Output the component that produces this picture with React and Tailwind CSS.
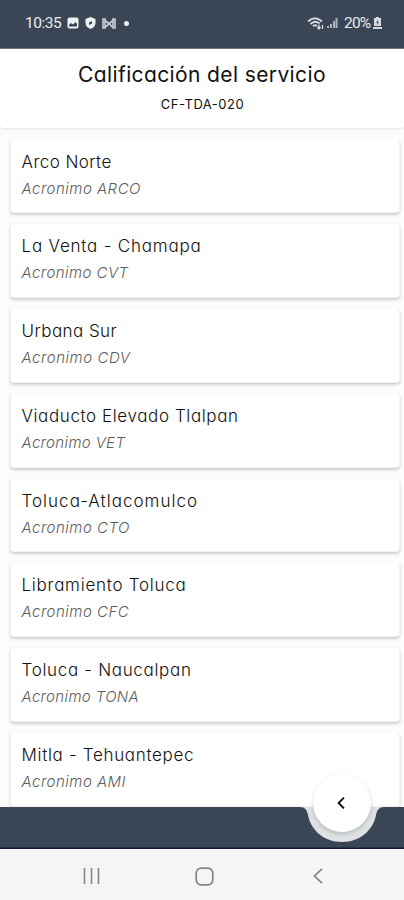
const roads = [
  { name: 'Arco Norte', code: 'ARCO', nameGap: '0.45px', codeGap: '0.5px' },
  { name: 'La Venta - Chamapa', code: 'CVT', nameGap: '0.8px', codeGap: '0.45px' },
  { name: 'Urbana Sur', code: 'CDV', nameGap: '0.45px', codeGap: '0.55px' },
  { name: 'Viaducto Elevado Tlalpan', code: 'VET', nameGap: '0.6px', codeGap: '0.35px' },
  { name: 'Toluca-Atlacomulco', code: 'CTO', nameGap: '1.02px', codeGap: '0.5px' },
  { name: 'Libramiento Toluca', code: 'CFC', nameGap: '0.75px', codeGap: '0.5px' },
  { name: 'Toluca - Naucalpan', code: 'TONA', nameGap: '0.68px', codeGap: '0.35px' },
  { name: 'Mitla - Tehuantepec', code: 'AMI', nameGap: '0.68px', codeGap: '0.5px' },
];

function StatusBar() {
  return (
    <div className="flex h-[49px] shrink-0 items-center justify-between border-b border-[#6d7580] bg-[#3a4655] pr-[22px] pb-[2px] pl-[25px] font-['Roboto',sans-serif] text-[#e9edf1]">
      <div className="flex items-center">
        <span className="w-[36px] text-[15.5px] leading-[18px] tracking-[-0.5px]">10:35</span>
        <svg className="ml-[6px]" width="12" height="12" viewBox="0 0 12 12">
          <rect x="0.5" y="0.5" width="11" height="11" rx="2" fill="#eef1f4" />
          <path d="M2 9.5V8l2-2 2 1.6L8.500 5 10 7v2.500z" fill="#3a4655" />
        </svg>
        <svg className="ml-[6px]" width="11" height="12" viewBox="0 0 11 12">
          <path d="M5.500 0 10.500 2v4c0 3-2.200 5-5 6C2.700 11 .5 9 .5 6V2z" fill="#eef1f4" />
          <path d="M4 8V5.500L7 4v2.500z" fill="#3a4655" />
        </svg>
        <svg className="ml-[6px]" width="14" height="11" viewBox="0 0 14 11" fill="none" stroke="#c6cdd4" strokeWidth="1.600">
          <path d="M1 10V1h2v9zM11 10V1h2v9zM3 2l4 4 4-4M4 9l3-4 3 4" />
        </svg>
        <span className="ml-[8px] size-[5px] rounded-full bg-[#e9edf1]" />
      </div>
      <div className="flex items-center">
        <svg width="17" height="13" viewBox="0 0 17 13" fill="none" stroke="#d5dbe0" strokeWidth="1.800">
          <path d="M1 4.500Q8 -2 15 4.500M3.500 7Q8 2.800 12.500 6.500M6 9.200q2-1.800 4 0" />
          <path d="M12 7.500v4M10.500 10l1.500 2 1.500-2M15.500 12V8" strokeWidth="1.300" />
        </svg>
        <svg className="ml-[3px]" width="11" height="12" viewBox="0 0 11 12" fill="#aab2bb">
          <path d="M0 9h2v2H0zM3 7h2v4H3zM6 4h2v7H6zM8.500 1h2v10h-2z" />
        </svg>
        <span className="ml-[6px] w-[28px] text-[15.5px] leading-[18px] tracking-[-0.8px]">20%</span>
        <svg className="ml-px" width="9" height="12" viewBox="0 0 9 12">
          <path d="M3 0h3v1h2v8H1V1h2zM0 10h9v2H0z" fill="#d5dbe0" />
          <path d="M5 2.500 3 5.500h1.500L4 8l2-3H4.700z" fill="#3a4655" />
        </svg>
      </div>
    </div>
  );
}

function RoadCard({ road }) {
  return (
    <li className="h-[74.800px] shrink-0 rounded-[4px] border border-[#f2f2f2] border-t-[#f8f8f8] bg-white pt-[10px] pl-[10.500px] shadow-[0_2px_3px_rgba(0,0,0,0.18)]">
      <p className="h-[24px] text-[17px] leading-[24px] font-light whitespace-nowrap text-[#111]">
        <span style={{ letterSpacing: road.nameGap }}>{road.name}</span>
      </p>
      <p className="mt-[4px] h-[22px] text-[15px] leading-[22px] font-light whitespace-nowrap text-[#5c5c5c] italic">
        <span style={{ letterSpacing: road.codeGap }}>Acronimo {road.code}</span>
      </p>
    </li>
  );
}

function BottomBar() {
  return (
    <div className="relative h-[42px] shrink-0">
      <svg className="block" width="404" height="42" viewBox="0 0 404 42">
        <rect width="404" height="42" fill="#dfe2e4" />
        <path d="M0 0H300C305 0 307 3 308 8C311 24 325 35 342 35C359 35 373 24 376 8C377 3 379 0 384 0H404V42H0Z" fill="#3a4655" />
        <rect y="40.500" width="404" height="1.500" fill="#10183a" />
      </svg>
      <button className="absolute -top-[33px] left-[313px] flex size-[58px] items-center justify-center rounded-full bg-white shadow-[0_2px_4px_rgba(0,0,0,0.18)]" aria-label="Volver">
        <svg className="-translate-x-px" width="8" height="12" viewBox="0 0 8 12" fill="none" stroke="#111" strokeWidth="1.900">
          <path d="M7 .6 1.600 6 7 11.400" />
        </svg>
      </button>
    </div>
  );
}

function SystemNav() {
  return (
    <div className="flex h-[51px] shrink-0 items-center bg-[#f5f5f5] pt-[3px]">
      <svg className="ml-[83px]" width="17" height="16" viewBox="0 0 17 16" stroke="#858585" strokeWidth="1.600">
        <path d="M1.500 0v16M8.500 0v16M15.500 0v16" />
      </svg>
      <svg className="ml-[95px]" width="19" height="19" viewBox="0 0 19 19" fill="none" stroke="#858585" strokeWidth="1.700">
        <rect x="1.200" y="1.200" width="16.600" height="16.600" rx="5" />
      </svg>
      <svg className="ml-[99px]" width="10" height="16" viewBox="0 0 10 16" fill="none" stroke="#858585" strokeWidth="1.700">
        <path d="M9 .8 1.500 8 9 15.200" />
      </svg>
    </div>
  );
}

export default function App() {
  return (
    <div className="flex h-[900px] w-[404px] flex-col overflow-hidden bg-[#fcfcfc] font-['Inter',sans-serif] [font-feature-settings:'cv11']">
      <StatusBar />
      <header className="flex h-[80px] shrink-0 flex-col items-center rounded-b-[4px] border-b border-[#ececec] bg-white pt-[11px] shadow-[0_1px_2px_rgba(0,0,0,0.06)]">
        <h1 className="text-[21px] leading-[30px] font-normal tracking-[0.38px] whitespace-nowrap text-[#111]">Calificación del servicio</h1>
        <p className="mt-[4px] pl-px text-[13px] leading-[20px] tracking-[0.5px] text-[#111]">CF-TDA-020</p>
      </header>
      <ul className="flex h-[678px] shrink-0 flex-col gap-[10px] overflow-hidden pt-[9.500px] pr-[4px] pl-[10px]">
        {roads.map((road) => (
          <RoadCard key={road.code} road={road} />
        ))}
      </ul>
      <BottomBar />
      <SystemNav />
    </div>
  );
}
